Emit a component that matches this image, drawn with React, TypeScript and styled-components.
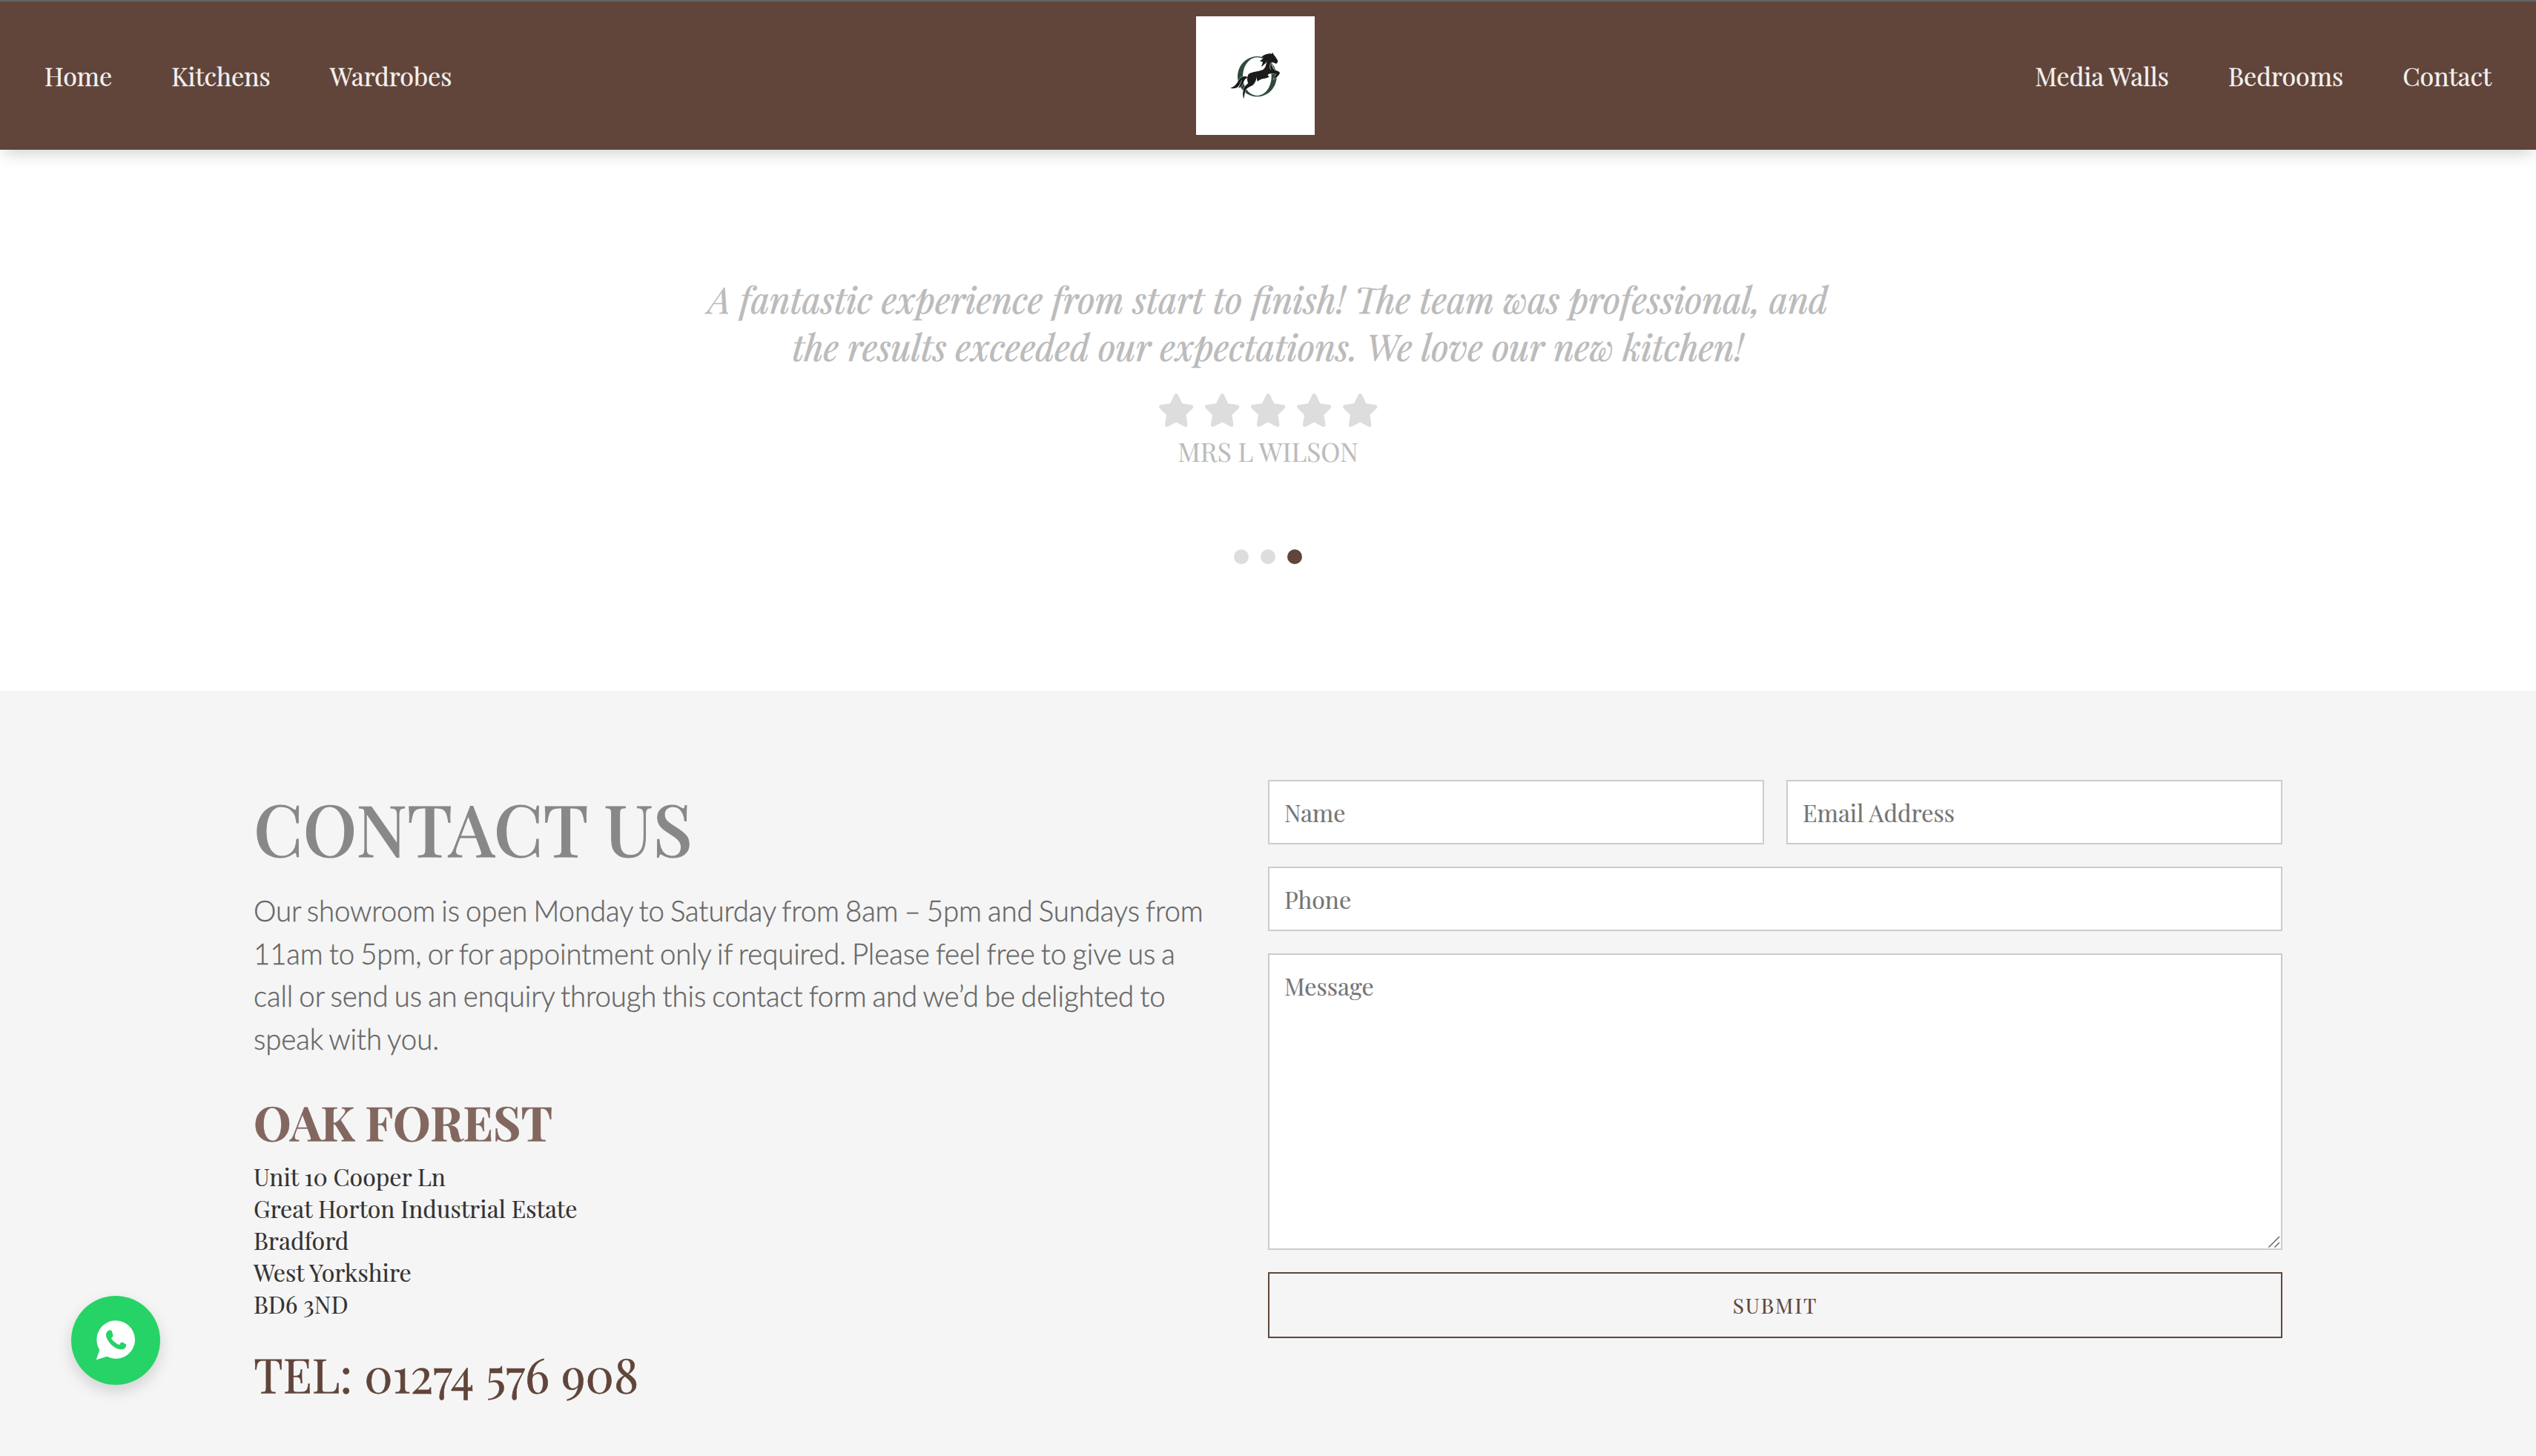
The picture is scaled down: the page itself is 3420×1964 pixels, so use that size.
import React from 'react';
import styled, { createGlobalStyle } from 'styled-components';
import { FaStar } from 'react-icons/fa6';

const brown = '#61453a';
const serif = '"Playfair Display", "Liberation Serif", serif';

const GlobalStyle = createGlobalStyle`
  *, *::before, *::after { box-sizing: border-box; }
  body { margin: 0; background: #fff; font-family: ${serif}; -webkit-text-stroke-width: 0.2px; }
  h2, h3, p, blockquote { margin: 0; padding: 0; }
`;

const Page = styled.div`
  height: 1964px;
  overflow: hidden;
  display: flex;
  flex-direction: column;
  background: #fff;
`;

const Header = styled.header`
  position: relative;
  z-index: 2;
  height: 202px;
  flex: none;
  padding: 0 60px;
  display: grid;
  grid-template-columns: 1553px 160px 1fr;
  align-items: center;
  background: ${brown};
  border-top: 2px solid #5f6463;
  box-shadow: 0 10px 20px -5px rgba(0, 0, 0, 0.18);
`;

const NavGroup = styled.nav<{ $end?: boolean }>`
  display: flex;
  gap: 80px;
  justify-content: ${(p) => (p.$end ? 'flex-end' : 'flex-start')};
`;

const NavLink = styled.a`
  color: #f3f1f0;
  font-size: 34px;
  line-height: 45px;
  -webkit-text-stroke-width: 0.3px;
`;

const Logo = styled.svg`
  display: block;
  width: 160px;
  height: 160px;
  background: #fff;
`;

const Testimonials = styled.section`
  height: 730px;
  flex: none;
  padding-top: 169px;
  display: flex;
  flex-direction: column;
  align-items: center;
  text-align: center;
  color: #bbb;
`;

const Quote = styled.blockquote`
  width: 1560px;
  font-size: 48px;
  line-height: 64px;
  font-style: italic;
  -webkit-text-stroke-width: 0.6px;
`;

const Stars = styled.div`
  display: flex;
  gap: 11.6px;
  margin-top: 32px;
  color: #ddd;
  svg { display: block; width: 50.4px; height: 44.8px; }
`;

const Author = styled.p`
  margin-top: 9.2px;
  font-size: 35.2px;
  line-height: 47px;
`;

const Dots = styled.div`
  display: flex;
  gap: 16px;
  margin-top: 109px;
`;

const Dot = styled.span<{ $active?: boolean }>`
  width: 20px;
  height: 20px;
  border-radius: 50%;
  background: ${(p) => (p.$active ? brown : '#ddd')};
`;

const Contact = styled.section`
  flex: 1;
  padding: 120px 342px 0;
  display: grid;
  grid-template-columns: 1fr 1fr;
  align-items: start;
  background: #f5f5f5;
`;

const Info = styled.div`
  padding-right: 70px;
`;

const Title = styled.h2`
  font-size: 96px;
  line-height: 128px;
  font-weight: 500;
  color: #888;
  -webkit-text-stroke-width: 1px;
`;

const Intro = styled.p`
  margin-top: 20px;
  font-family: Lato, sans-serif;
  font-weight: 300;
  font-size: 38.4px;
  line-height: 57.6px;
  word-spacing: -2.2px;
  letter-spacing: -0.1px;
  color: #666;
  -webkit-text-stroke-width: 0.4px;
`;

const Company = styled.h3`
  margin-top: 40px;
  font-size: 64px;
  line-height: 85px;
  font-weight: 700;
  color: #82675f;
  -webkit-text-stroke-width: 0.5px;
`;

const Address = styled.address`
  margin-top: 10px;
  font-style: normal;
  font-size: 32px;
  line-height: 43px;
  color: #333;
`;

const Phone = styled.p`
  margin-top: 30px;
  font-size: 64px;
  line-height: 85px;
  color: ${brown};
  -webkit-text-stroke-width: 0.6px;
`;

const Form = styled.form`
  display: grid;
  grid-template-columns: 1fr 1fr;
  gap: 30px;
`;

const Field = styled.input<{ $wide?: boolean }>`
  grid-column: ${(p) => (p.$wide ? '1 / -1' : 'auto')};
  width: 100%;
  height: 87px;
  padding: 20px;
  border: 2px solid #ccc;
  border-radius: 0;
  background: #fff;
  font: 32px ${serif};
  outline: none;
  &::placeholder { color: #757575; opacity: 1; }
`;

const MessageWrap = styled.div`
  position: relative;
  grid-column: 1 / -1;
  height: 400px;
`;

const Message = styled.textarea`
  display: block;
  width: 100%;
  height: 100%;
  padding: 20px;
  border: 2px solid #ccc;
  border-radius: 0;
  background: #fff;
  font: 32px ${serif};
  resize: none;
  outline: none;
  &::placeholder { color: #757575; opacity: 1; }
`;

const Grip = styled.svg`
  position: absolute;
  right: 3px;
  bottom: 3px;
  width: 16px;
  height: 16px;
`;

const Submit = styled.button`
  grid-column: 1 / -1;
  height: 89px;
  padding: 0;
  border: 2px solid ${brown};
  border-radius: 0;
  background: transparent;
  color: ${brown};
  font: 28px ${serif};
  letter-spacing: 2px;
`;

const WhatsApp = styled.a`
  position: fixed;
  left: 96px;
  bottom: 96px;
  width: 120px;
  height: 120px;
  border-radius: 50%;
  display: flex;
  align-items: center;
  justify-content: center;
  background: #25d366;
  box-shadow: 0 8px 20px rgba(0, 0, 0, 0.15);
  svg { display: block; width: 120px; height: 120px; }
`;

function HorseLogo() {
  return (
    <Logo viewBox="69 66 480 480" aria-label="Oak Forest">
      <path
        fillRule="evenodd"
        fill="#2f4a3a"
        d="M316 228a79 81.500 0 1 0 .1 0zM316 232a58 77.500 0 1 1-.1 0z"
      />
      <g fill="#1b1b19" stroke="#fff" strokeWidth="2.500" paintOrder="stroke">
        <path d="M274 310C262 306 250 311 242 323C235 335 228 350 208 356C220 360 234 358 241 349C247 341 248 329 256 321C250 334 246 346 240 357C252 352 258 342 262 331C265 322 270 317 278 316Z" />
        <path d="M380 213L382 220C388 226 393 234 399 244C401 251 397 258 392 258C388 254 381 253 376 251C376 262 380 273 388 284C396 285 404 288 408 294C406 305 395 314 382 321C386 310 391 304 395 300C385 297 374 297 364 299C357 302 358 307 366 309C357 319 340 316 330 322C324 325 320 328 317 330C315 324 315 318 314 312C312 325 308 337 299 344C288 350 275 354 269 366C266 376 264 386 262 400C256 386 259 370 262 358C266 348 274 342 280 337C274 324 275 308 282 299C296 290 320 291 338 282C348 276 352 266 353 254C345 258 340 266 333 270C335 263 338 257 339 250C336 250 331 250 327 246C335 244 337 238 342 233C337 233 334 234 330 236C338 224 352 217 371 217L374 218Z" />
      </g>
      <path
        d="M354 250C350 264 347 278 337 284M374 252C374 264 380 276 386 282M370 256C369 266 365 276 372 282"
        stroke="#fff"
        strokeWidth="1.800"
        fill="none"
      />
    </Logo>
  );
}

function WhatsAppIcon() {
  return (
    <svg viewBox="78 84 360 360">
      <path fill="#fff" d="M259 184a77 77 0 1 1-36 145L179 343L193 302A77 77 0 0 1 259 184z" />
      <path
        fill="#25d366"
        d="M236 223C228 223 219 231 219 242C219 254 229 270 243 284C256 296 270 301 281 301C291 301 299 295 300 286V280L283 271C278 272 277 278 273 282C262 280 246 266 240 256C241 251 248 250 248 245L242 226C240 224 238 223 236 223z"
      />
    </svg>
  );
}

const leftLinks = ['Home', 'Kitchens', 'Wardrobes'];
const rightLinks = ['Media Walls', 'Bedrooms', 'Contact'];
const address = ['Unit 10 Cooper Ln', 'Great Horton Industrial Estate', 'Bradford', 'West Yorkshire', 'BD6 3ND'];

export default function App() {
  return (
    <>
      <GlobalStyle />
      <Page>
        <Header>
          <NavGroup>{leftLinks.map((l) => <NavLink key={l}>{l}</NavLink>)}</NavGroup>
          <HorseLogo />
          <NavGroup $end>{rightLinks.map((l) => <NavLink key={l}>{l}</NavLink>)}</NavGroup>
        </Header>
        <Testimonials>
          <Quote>
            A fantastic experience from start to finish! The team was professional, and the results exceeded our
            expectations. We love our new kitchen!
          </Quote>
          <Stars>{[0, 1, 2, 3, 4].map((i) => <FaStar key={i} />)}</Stars>
          <Author>MRS L WILSON</Author>
          <Dots>
            <Dot />
            <Dot />
            <Dot $active />
          </Dots>
        </Testimonials>
        <Contact>
          <Info>
            <Title>CONTACT US</Title>
            <Intro>
              Our showroom is open Monday to Saturday from 8am – 5pm and Sundays from 11am to 5pm, or for appointment
              only if required. Please feel free to give us a call or send us an enquiry through this contact form and
              we’d be delighted to speak with you.
            </Intro>
            <Company>OAK FOREST</Company>
            <Address>{address.map((l) => <div key={l}>{l}</div>)}</Address>
            <Phone>TEL: 01274 576 908</Phone>
          </Info>
          <Form>
            <Field placeholder="Name" />
            <Field placeholder="Email Address" />
            <Field $wide placeholder="Phone" />
            <MessageWrap>
              <Message placeholder="Message" />
              <Grip viewBox="0 0 16 16" stroke="#666" strokeWidth="1.500">
                <path d="M0.500 15.500L15 1M8.500 15.500L15 9" />
              </Grip>
            </MessageWrap>
            <Submit type="button">SUBMIT</Submit>
          </Form>
        </Contact>
      </Page>
      <WhatsApp aria-label="WhatsApp">
        <WhatsAppIcon />
      </WhatsApp>
    </>
  );
}
